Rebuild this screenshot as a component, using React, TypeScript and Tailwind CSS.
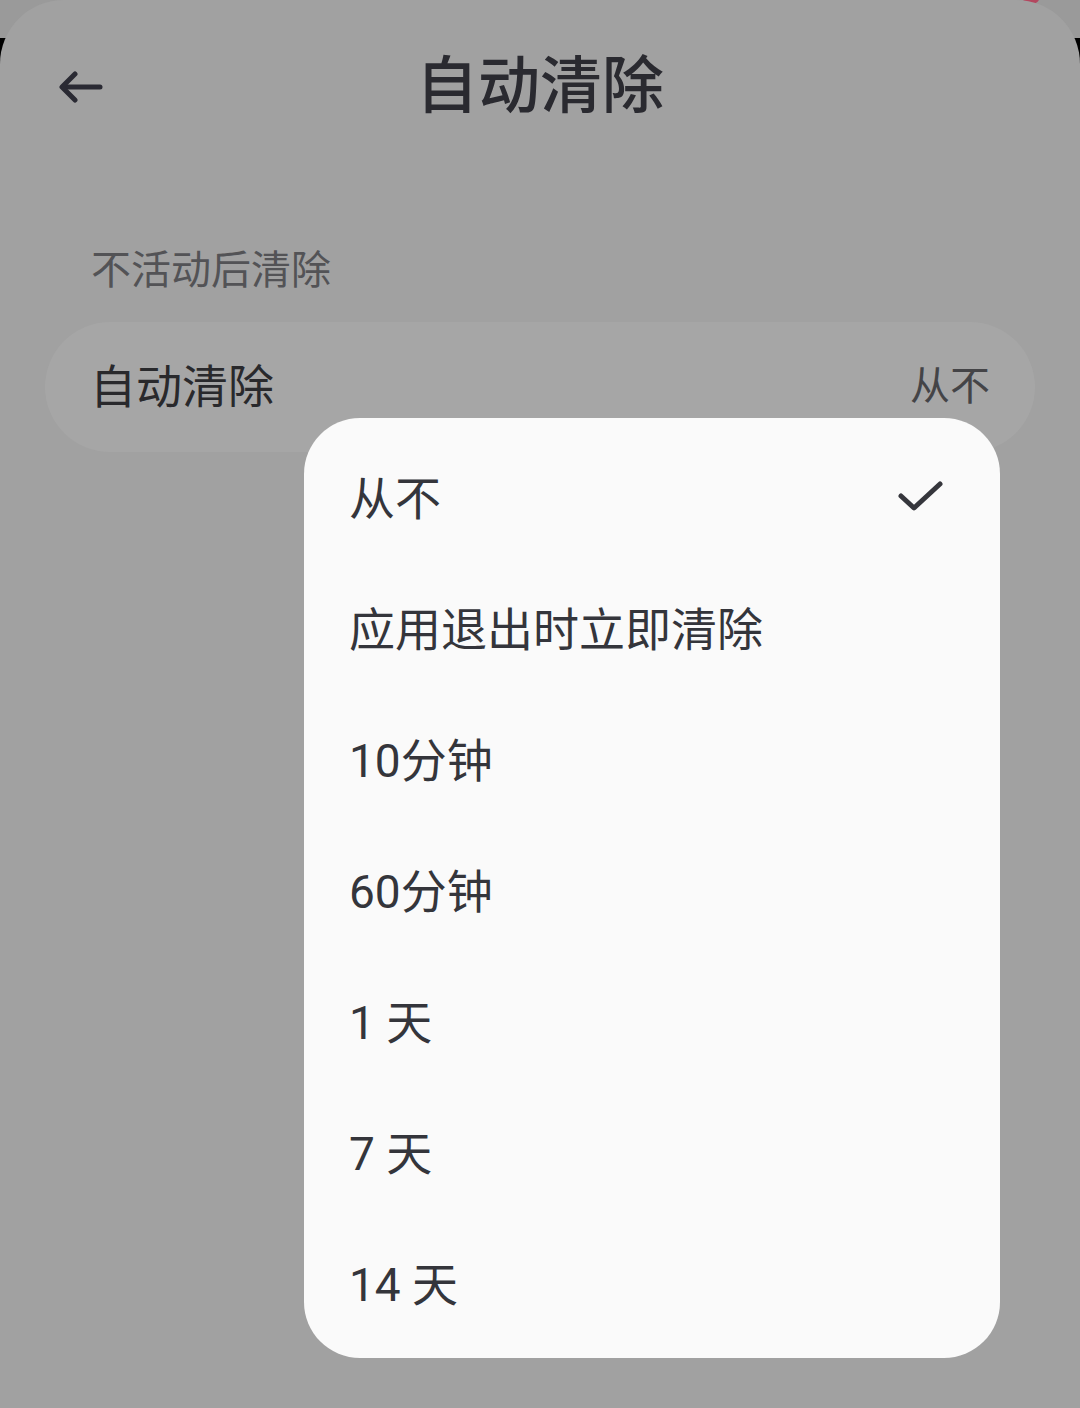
import React from 'react';

const options = ['从不', '应用退出时立即清除', '10分钟', '60分钟', '1 天', '7 天', '14 天'];

export default function App() {
  return (
    <div
      className="relative w-[1080px] h-[1408px] overflow-hidden bg-[linear-gradient(to_bottom,#9a9a9a_0px,#9a9a9a_38px,#000_38px,#000_100%)]"
      style={{ fontFamily: 'Roboto, "Noto Sans CJK SC", sans-serif' }}
    >
      {/* pink bit peeking behind the sheet */}
      <div className="absolute -top-3 right-[40px] w-[18px] h-[16px] rounded-full bg-[#b3475f]" />

      {/* Sheet */}
      <div className="relative h-full rounded-t-[64px] bg-[#a1a1a1]">
        {/* Header */}
        <div className="relative flex items-center justify-center h-[176px] pb-[1px]">
          <button className="absolute left-[52px] top-[63px] w-[54px] h-[44px] flex items-center justify-center text-[#2a2a33]">
            <svg width="48" height="36" viewBox="0 0 48 36" fill="none" stroke="currentColor" strokeWidth="5" strokeLinecap="round" strokeLinejoin="round">
              <path d="M45 20H8" />
              <path d="M20 7L7 20l13 13" />
            </svg>
          </button>
          <h1 className="text-[62px] leading-none text-[#2a2a30] font-medium -mt-[2px]">自动清除</h1>
        </div>

        {/* Section */}
        <div className="px-[45px] pt-[75px]">
          <div className="pl-[46px] text-[40px] leading-none text-[#535356]">不活动后清除</div>
          <div className="mt-[31px] h-[130px] rounded-[65px] bg-[#a6a6a6] flex items-center justify-between pl-[45px] pr-[45px]">
            <span className="text-[46px] leading-none text-[#29292c]">自动清除</span>
            <span className="text-[40px] leading-none text-[#444447]">从不</span>
          </div>
        </div>

        {/* Dropdown menu */}
        <div className="absolute left-[304px] top-[418px] w-[696px] rounded-[56px] bg-[#fafafa] pt-[15px] pb-[8px]">
          {options.map((o, i) => (
            <div key={o} className="h-[131px] flex items-center justify-between pl-[45px] pr-[56px]">
              <span className="text-[46px] leading-none text-[#34353b]">{o}</span>
              {i === 0 && (
                <svg width="46" height="36" viewBox="0 0 46 36" fill="none" stroke="#35363c" strokeWidth="5" strokeLinecap="round" strokeLinejoin="round" className="-mt-[2px]">
                  <path d="M3 16l13 12L42 4" />
                </svg>
              )}
            </div>
          ))}
        </div>
      </div>
    </div>
  );
}
